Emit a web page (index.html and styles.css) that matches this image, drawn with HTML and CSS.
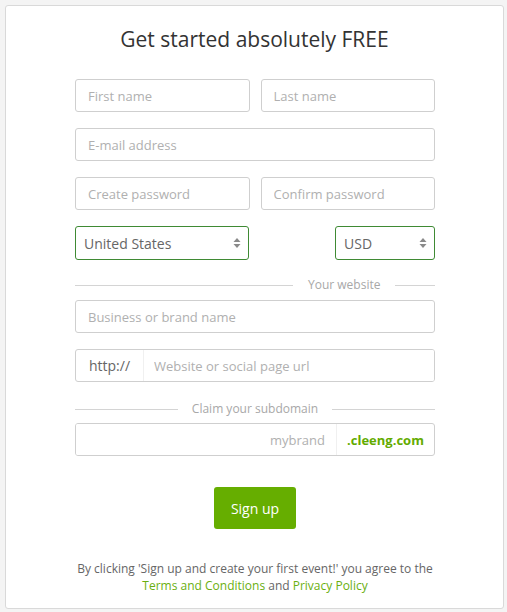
FILE: index.html
```html
<!DOCTYPE html>
<html lang="en">
<head>
<meta charset="utf-8">
<title>Sign up</title>
<link rel="stylesheet" href="styles.css">
</head>
<body>
<div class="card">
  <h1 class="title">Get started absolutely FREE</h1>
  <form class="form">
    <div class="row two">
      <input class="field" type="text" placeholder="First name">
      <input class="field" type="text" placeholder="Last name">
    </div>
    <div class="row">
      <input class="field" type="text" placeholder="E-mail address">
    </div>
    <div class="row two">
      <input class="field" type="password" placeholder="Create password">
      <input class="field" type="password" placeholder="Confirm password">
    </div>
    <div class="row selects">
      <div class="select country">
        <span>United States</span>
        <svg class="arrows" width="8" height="12" viewBox="0 0 8 12"><path d="M4 1 L7.5 5 H0.5 Z M4 11 L0.5 7 H7.5 Z" fill="#8a8a8a"/></svg>
      </div>
      <div class="select currency">
        <span>USD</span>
        <svg class="arrows" width="8" height="12" viewBox="0 0 8 12"><path d="M4 1 L7.5 5 H0.5 Z M4 11 L0.5 7 H7.5 Z" fill="#8a8a8a"/></svg>
      </div>
    </div>
    <div class="divider website">
      <span class="line"></span>
      <span class="label">Your website</span>
      <span class="line short"></span>
    </div>
    <div class="row">
      <input class="field" type="text" placeholder="Business or brand name">
    </div>
    <div class="row">
      <div class="group">
        <span class="addon prefix">http://</span>
        <input class="inner" type="text" placeholder="Website or social page url">
      </div>
    </div>
    <div class="divider claim">
      <span class="line"></span>
      <span class="label">Claim your subdomain</span>
      <span class="line"></span>
    </div>
    <div class="row">
      <div class="group">
        <input class="inner right" type="text" placeholder="mybrand">
        <span class="addon suffix">.cleeng.com</span>
      </div>
    </div>
    <div class="actions">
      <button class="btn" type="button">Sign up</button>
    </div>
    <p class="terms">By clicking 'Sign up and create your first event!' you agree to the<br><a href="#">Terms and Conditions</a> and <a href="#">Privacy Policy</a></p>
  </form>
</div>
</body>
</html>
```
FILE: styles.css
```css
* { box-sizing: border-box; }
html, body {
  margin: 0;
  padding: 0;
  background: #f4f4f4;
}
body {
  padding: 5px 3px 3px 5px;
  font-family: "Open Sans", "Liberation Sans", sans-serif;
}
.card {
  width: 499px;
  height: 604px;
  background: #fff;
  border: 1px solid #d9d9d9;
  border-radius: 3px;
  padding-top: 19px;
}
.title {
  margin: 0;
  font-size: 21px;
  font-weight: 400;
  line-height: 28px;
  color: #333;
  text-align: center;
}
.form {
  width: 360px;
  margin: 26px auto 0 69px;
  display: flex;
  flex-direction: column;
}
.row {
  display: flex;
  height: 33px;
  margin-bottom: 16px;
}
.row.two { gap: 11px; }
.row.two .field { flex: 1; min-width: 0; }
.field {
  width: 100%;
  height: 33px;
  border: 1px solid #cfcfcf;
  border-radius: 3px;
  padding: 0 12px;
  font-family: inherit;
  font-size: 13px;
  color: #555;
  background: #fff;
  outline: none;
}
.field::placeholder, .inner::placeholder { color: #b0b0b0; }
.selects { justify-content: space-between; margin-bottom: 0; }
.select {
  height: 34px;
  border: 1px solid #3f8a34;
  border-radius: 3px;
  display: flex;
  align-items: center;
  justify-content: space-between;
  padding: 0 7px 0 8px;
  font-size: 14px;
  color: #666;
}
.country { width: 174px; }
.currency { width: 100px; }
.arrows { display: block; }
.divider {
  display: flex;
  align-items: center;
  height: 16px;
  margin: 18px 0 7px;
  gap: 14px;
}
.divider .line {
  flex: 1;
  height: 1px;
  background: #d4d4d4;
}
.divider .line.short { flex: 0 0 40px; }
.divider.website { gap: 15px; }
.divider.website .line:first-child { flex: 0 0 218px; }
.divider.claim { margin: 3px 0 6px; }
.divider .label {
  flex: 0 0 auto;
  white-space: nowrap;
  font-size: 12px;
  color: #a8a8a8;
  line-height: 16px;
}
.group {
  display: flex;
  width: 100%;
  height: 33px;
  border: 1px solid #cfcfcf;
  border-radius: 3px;
  overflow: hidden;
}
.addon {
  display: flex;
  align-items: center;
  font-size: 14px;
}
.prefix {
  width: 68px;
  justify-content: center;
  color: #666;
  border-right: 1px solid #f0f0f0;
}
.suffix {
  width: 98px;
  justify-content: center;
  border-left: 1px solid #f0f0f0;
  color: #63ab00;
  font-weight: 700;
  font-size: 13px;
}
.inner {
  flex: 1;
  min-width: 0;
  border: 0;
  outline: none;
  padding: 0 10px;
  font-family: inherit;
  font-size: 13px;
  color: #555;
  background: #fff;
}
.inner.right { text-align: right; padding-right: 11px; }
.actions {
  display: flex;
  justify-content: center;
  margin-top: 15px;
}
.btn {
  width: 82px;
  height: 42px;
  border: 0;
  border-radius: 3px;
  background: #66ae00;
  color: #fff;
  font-family: inherit;
  font-size: 14px;
  cursor: pointer;
}
.terms {
  margin: 31px 0 0;
  text-align: center;
  font-size: 12px;
  line-height: 17px;
  color: #666;
  width: 400px;
  margin-left: -20px;
}
.terms a {
  color: #6aaf0f;
  text-decoration: none;
}
```
